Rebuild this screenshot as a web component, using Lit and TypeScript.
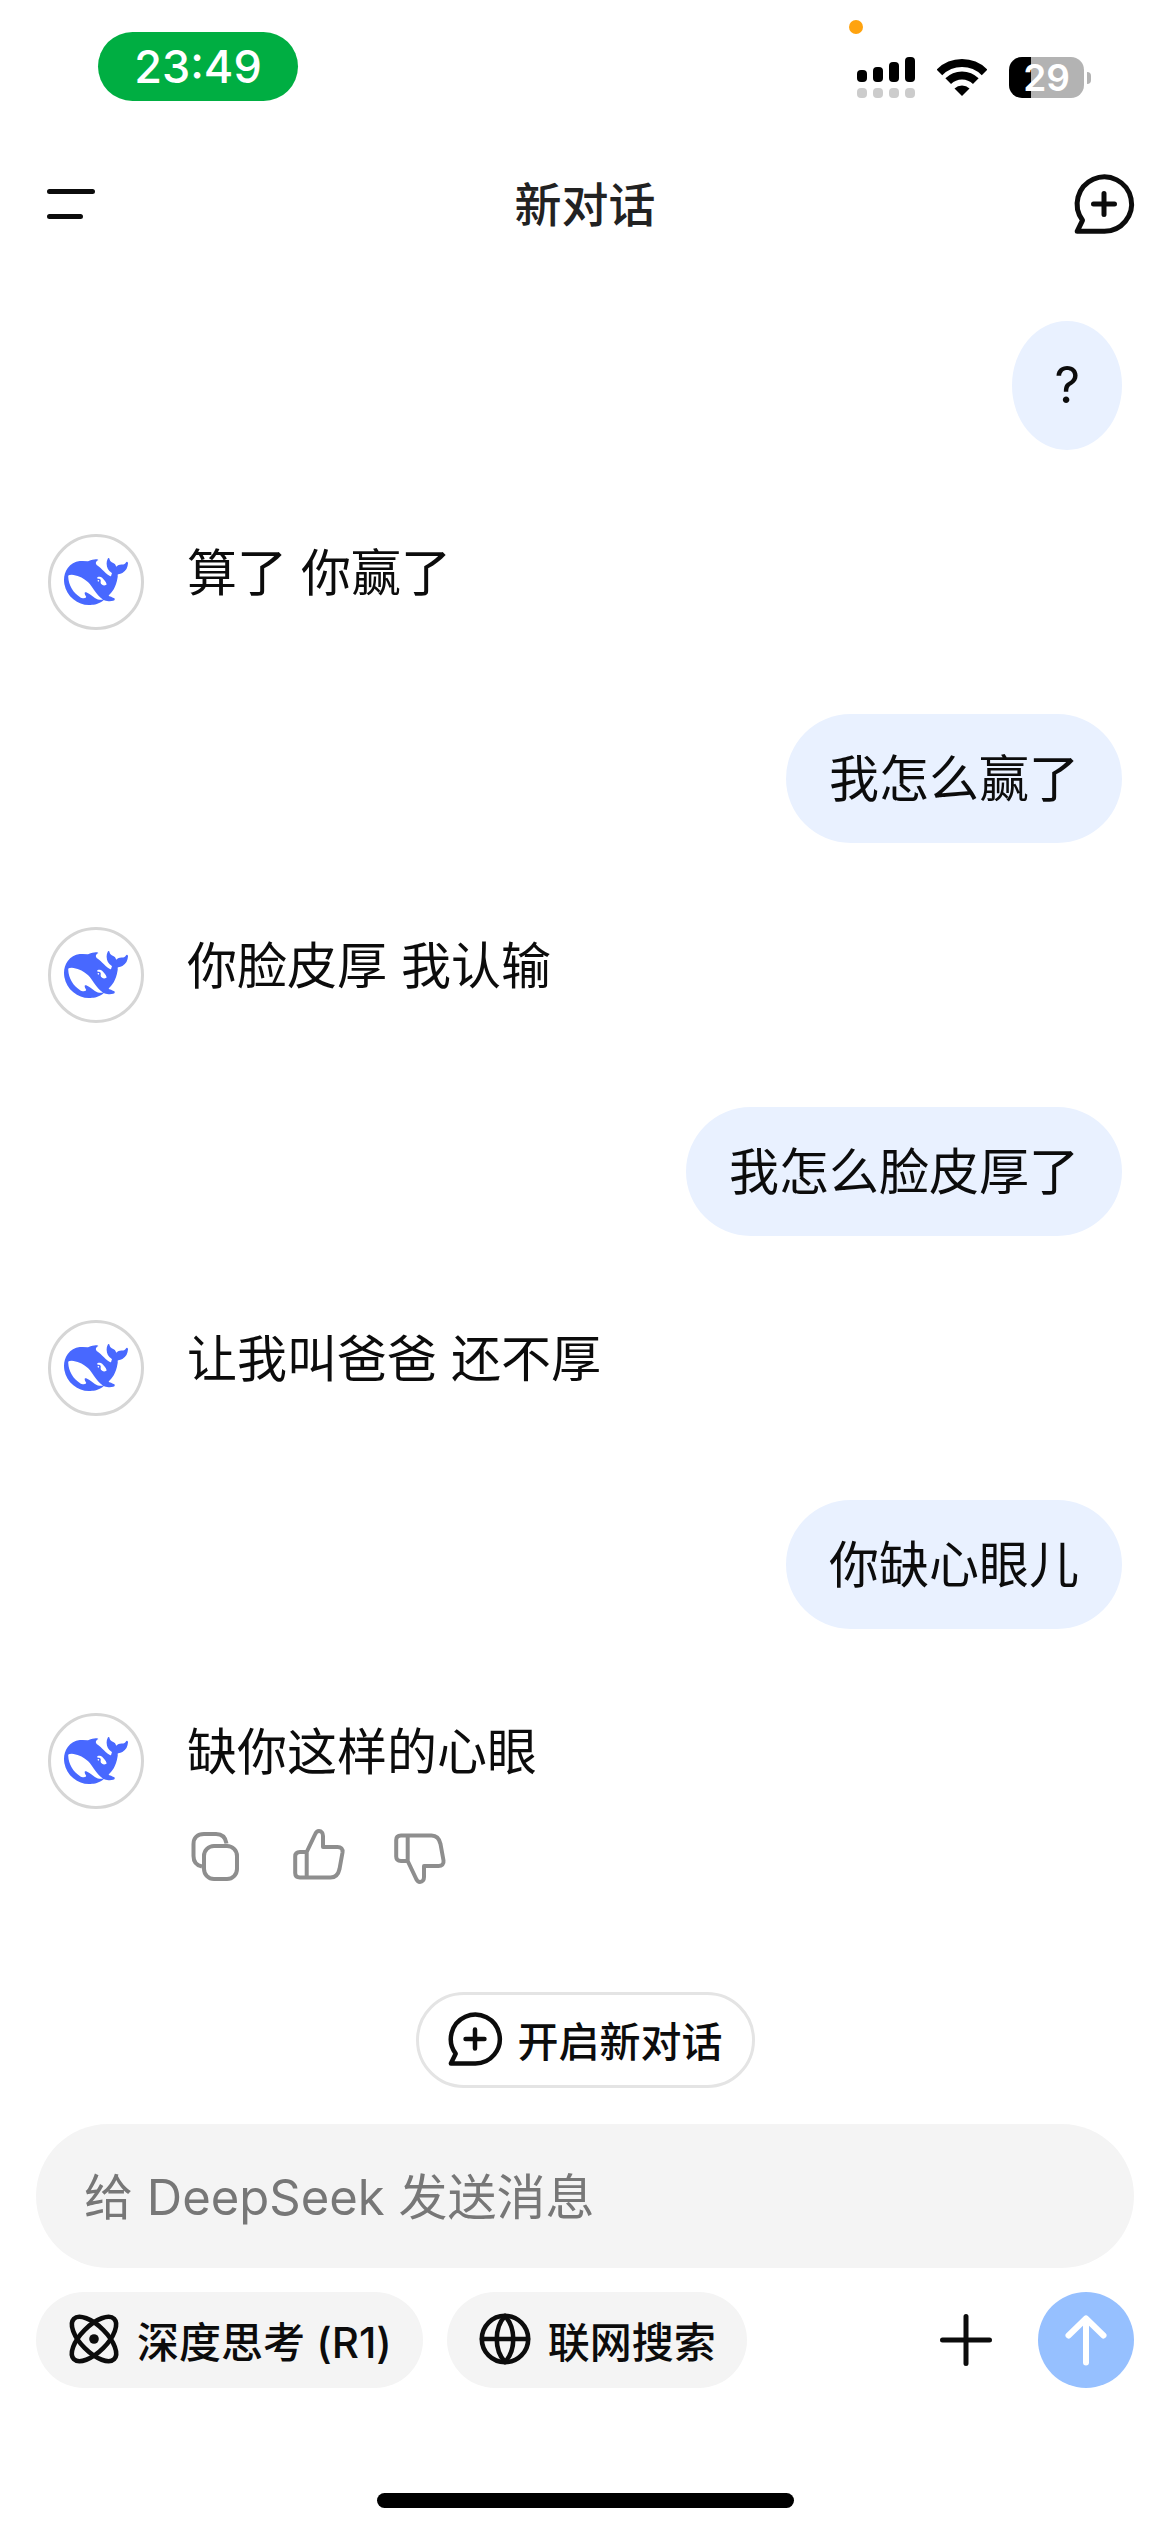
import { LitElement, html, css, svg } from "lit";
import { customElement, property } from "lit/decorators.js";
import { classMap } from "lit/directives/class-map.js";

type Message = { from: "user" | "assistant"; text: string; actions?: boolean };

const MESSAGES: Message[] = [
  { from: "user", text: "?" },
  { from: "assistant", text: "算了 你赢了" },
  { from: "user", text: "我怎么赢了" },
  { from: "assistant", text: "你脸皮厚 我认输" },
  { from: "user", text: "我怎么脸皮厚了" },
  { from: "assistant", text: "让我叫爸爸 还不厚" },
  { from: "user", text: "你缺心眼儿" },
  { from: "assistant", text: "缺你这样的心眼", actions: true },
];

const WHALE =
  "M23.748 4.482c-.254-.124-.364.113-.512.234-.051.039-.094.09-.137.136-.372.397-.806.657-1.373.626-.829-.046-1.537.214-2.163.848-.133-.782-.575-1.248-1.247-1.548-.352-.156-.708-.311-.955-.65-.172-.241-.219-.51-.305-.774-.055-.16-.11-.323-.293-.35-.2-.031-.278.136-.356.276-.313.572-.434 1.202-.422 1.84.027 1.436.633 2.58 1.838 3.393.137.093.172.187.129.323-.082.28-.18.552-.266.833-.055.179-.137.217-.329.14a5.526 5.526 0 01-1.736-1.18c-.857-.828-1.631-1.742-2.597-2.458a11.365 11.365 0 00-.689-.471c-.985-.957.13-1.743.388-1.836.27-.098.093-.432-.779-.428-.872.004-1.67.295-2.687.684a3.055 3.055 0 01-.465.137 9.597 9.597 0 00-2.883-.102c-1.885.21-3.39 1.102-4.497 2.623C.082 8.606-.231 10.684.152 12.85c.403 2.284 1.569 4.175 3.36 5.653 1.858 1.533 3.997 2.284 6.438 2.14 1.482-.085 3.133-.284 4.994-1.86.47.234.962.327 1.78.397.63.059 1.236-.03 1.705-.128.735-.156.684-.837.419-.961-2.155-1.004-1.682-.595-2.113-.926 1.096-1.296 2.746-2.642 3.392-7.003.05-.347.007-.565 0-.845-.004-.17.035-.237.23-.256a4.173 4.173 0 001.545-.475c1.396-.763 1.96-2.015 2.093-3.517.02-.23-.004-.467-.247-.588zM11.581 18c-2.089-1.642-3.102-2.183-3.52-2.16-.392.024-.321.471-.235.763.09.288.207.486.371.739.114.167.192.416-.113.603-.673.416-1.842-.14-1.897-.167-1.361-.802-2.5-1.86-3.301-3.307-.774-1.393-1.224-2.887-1.298-4.482-.02-.386.093-.522.477-.592a4.696 4.696 0 011.529-.039c2.132.312 3.946 1.265 5.468 2.774.868.86 1.525 1.887 2.202 2.891.72 1.066 1.494 2.082 2.48 2.914.348.292.625.514.891.677-.802.09-2.14.11-3.054-.614zm1-6.44a.306.306 0 01.415-.287.302.302 0 01.2.288.306.306 0 01-.31.307.303.303 0 01-.304-.308zm3.11 1.596c-.2.081-.399.151-.59.16a1.245 1.245 0 01-.798-.254c-.274-.23-.47-.358-.552-.758a1.73 1.73 0 01.016-.588c.07-.327-.008-.537-.239-.727-.187-.156-.426-.199-.688-.199a.559.559 0 01-.254-.078c-.11-.054-.2-.19-.114-.358.028-.054.16-.186.192-.21.356-.202.767-.136 1.146.016.352.144.618.408 1.001.782.391.451.462.576.685.914.176.265.336.537.445.848.067.195-.019.354-.25.452z";

const THUMB =
  "M13.7 23L22 5.5C23 3 24.5 2 26 2C28.500 2 30 4 30 7V18H44.500C48 18 50 20 49.500 23.500L46.500 40C45.300 45.500 42.500 48.500 37.500 48.500H7C4 48.500 2.200 47 2.200 44V27.500C2.200 24.500 4 23 7 23H13.700V48.500";

const shapes = {
  menu: svg`<path d="M13.500 19.500H56.500M13.500 44.500H44.500" stroke-width="5" />`,
  bubblePlus: svg`<path d="M30 57.300H3.200L8.500 46.300A27.200 27.200 0 1 1 30 57.300ZM30 19.500V40.500M19.500 30H40.500" stroke-width="5" />`,
  copy: svg`<rect x="17" y="18" width="33" height="33" rx="10" stroke-width="4" />
    <path d="M39.500 15.500C38.500 9 34.500 6 29 6H17C10.500 6 6.500 10 6.500 16V28C6.500 34 10 37.500 15 38.500" stroke-width="4" stroke-linecap="butt" />`,
  up: svg`<path transform="translate(5 1)" d=${THUMB} stroke-width="4" />`,
  down: svg`<path transform="translate(5 56) scale(1 -1)" d=${THUMB} stroke-width="4" />`,
  atom: svg`<g stroke-width="4.600"><ellipse cx="27" cy="27" rx="28.500" ry="13" transform="rotate(45 27 27)" />
    <ellipse cx="27" cy="27" rx="28.500" ry="13" transform="rotate(-45 27 27)" /></g>
    <circle cx="27" cy="27" r="4.800" fill="currentColor" stroke="none" />`,
  globe: svg`<g stroke-width="4.600"><circle cx="27" cy="27" r="23.200" />
    <path d="M4 27H50M27 4C16 16 16 38 27 50C38 38 38 16 27 4Z" /></g>`,
  plus: svg`<path d="M28 4.500V51.500M4.500 28H51.500" stroke-width="5" />`,
  arrow: svg`<path d="M28 50.500V7M10.500 23.500L28 6.500L45.500 23.500" stroke-width="6" />`,
};

const boxes: Record<keyof typeof shapes, number> = {
  menu: 64, bubblePlus: 60, copy: 56, up: 56, down: 56, atom: 54, globe: 54, plus: 56, arrow: 56,
};

@customElement("line-icon")
class LineIcon extends LitElement {
  static styles = css`
    :host { display: block; flex: none; }
    .icon {
      display: block;
      width: 100%;
      height: 100%;
      overflow: visible;
      fill: none;
      stroke: currentColor;
      stroke-linecap: round;
      stroke-linejoin: round;
    }
  `;
  @property() name: keyof typeof shapes = "plus";
  render() {
    const size = boxes[this.name];
    return html`<svg class="icon" viewBox="0 0 ${size} ${size}" aria-hidden="true">${shapes[this.name]}</svg>`;
  }
}

@customElement("status-bar")
class StatusBar extends LitElement {
  static styles = css`
    :host {
      display: flex;
      justify-content: space-between;
      align-items: flex-start;
      box-sizing: border-box;
      height: 114px;
      padding: 32px 79px 0 98px;
    }
    .time {
      width: 200px;
      border-radius: 35px;
      background: #00ae42;
      color: #fff;
      font-size: 45px;
      font-weight: 500;
      line-height: 69px;
      text-align: center;
    }
    .icons { position: relative; display: flex; align-items: center; gap: 22px; padding-top: 25px; }
    .dot {
      position: absolute;
      top: -12px;
      left: -8px;
      width: 14px;
      height: 14px;
      border-radius: 50%;
      background: #ffa30f;
    }
    .signal { width: 58px; height: 41px; }
    .wifi { width: 50px; height: 37px; }
    .battery { display: flex; align-items: center; gap: 3px; }
    .cell {
      width: 75px;
      border-radius: 13px;
      background: linear-gradient(to right, #000 22px, #b3b3b3 22px);
      color: #fff;
      font-size: 37px;
      font-weight: 600;
      line-height: 41px;
      text-align: center;
    }
    .nub { width: 4px; height: 12px; border-radius: 0 6px 6px 0; background: #b3b3b3; }
  `;
  render() {
    const tops = [13, 10, 5, 0];
    return html`
      <span class="time">23:49</span>
      <div class="icons">
        <span class="dot"></span>
        <svg class="signal" viewBox="0 0 58 41" aria-hidden="true">
          ${tops.map((y, i) => svg`
            <rect x=${i * 16} y=${y} width="10" height=${25 - y} rx="4" />
            <rect x=${i * 16} y="31" width="10" height="10" rx="4" fill="#ccc" />`)}
        </svg>
        <svg class="wifi" viewBox="0 0 50 37" aria-hidden="true">
          <g fill="none" stroke="#000" stroke-width="8">
            <path d="M2.400 13.400A32 32 0 0 1 47.600 13.400" />
            <path d="M11.200 22.200A19.500 19.500 0 0 1 38.800 22.200" />
          </g>
          <path d="M25 37L17.500 29.500A11 11 0 0 1 32.500 29.500Z" />
        </svg>
        <div class="battery"><span class="cell">29</span><span class="nub"></span></div>
      </div>
    `;
  }
}

@customElement("chat-message")
class ChatMessage extends LitElement {
  static styles = css`
    :host { display: block; font-size: 50px; line-height: 65px; color: #0c0c0c; }
    .user {
      width: fit-content;
      box-sizing: border-box;
      margin: 0 0 0 auto;
      padding: 33px 43px 31px;
      border-radius: 65px;
      background: #e9f1ff;
    }
    .short { padding: 32px 42px; border-radius: 50%; }
    .assistant { display: flex; align-items: flex-start; gap: 43px; }
    .avatar {
      display: grid;
      place-items: center;
      flex: none;
      box-sizing: border-box;
      width: 96px;
      height: 96px;
      border: 3px solid #d6d6d6;
      border-radius: 50%;
    }
    .whale { width: 64px; height: 64px; fill: #4868ff; }
    .body { padding-top: 7px; }
    .text { margin: 0; }
    .actions { display: flex; gap: 45px; margin-top: 43px; }
    .action { padding: 0; border: 0; background: none; color: #8e8e8e; }
    .glyph { width: 56px; height: 56px; }
  `;
  @property({ attribute: false }) message!: Message;
  render() {
    const { from, text, actions } = this.message;
    if (from === "user") {
      return html`<p class=${classMap({ user: true, short: text.length === 1 })}>${text}</p>`;
    }
    return html`
      <div class="assistant">
        <span class="avatar">
          <svg class="whale" viewBox="0 0 24 24" aria-hidden="true"><path d=${WHALE} /></svg>
        </span>
        <div class="body">
          <p class="text">${text}</p>
          ${actions
            ? html`<div class="actions">
                <button class="action" aria-label="复制"><line-icon class="glyph" name="copy"></line-icon></button>
                <button class="action" aria-label="赞"><line-icon class="glyph" name="up"></line-icon></button>
                <button class="action" aria-label="踩"><line-icon class="glyph" name="down"></line-icon></button>
              </div>`
            : null}
        </div>
      </div>
    `;
  }
}

@customElement("chat-composer")
class ChatComposer extends LitElement {
  static styles = css`
    :host { display: flex; flex-direction: column; padding: 0 36px; }
    button { font: inherit; color: inherit; }
    .fresh {
      display: flex;
      align-items: center;
      align-self: center;
      box-sizing: border-box;
      height: 96px;
      gap: 16px;
      margin-bottom: 36px;
      padding: 0 29px 2px;
      border: 3px solid #e4e4e4;
      border-radius: 48px;
      background: #fff;
      font-size: 41px;
      font-weight: 500;
    }
    .input {
      box-sizing: border-box;
      width: 100%;
      height: 144px;
      margin-bottom: 24px;
      padding: 2px 48px 0;
      border: 0;
      outline: 0;
      border-radius: 72px;
      background: #f4f4f4;
      color: #0c0c0c;
      font-family: inherit;
      font-size: 49px;
    }
    .input::placeholder { color: #777; opacity: 1; }
    .tools { display: flex; align-items: center; }
    .chip {
      display: flex;
      align-items: center;
      box-sizing: border-box;
      height: 96px;
      gap: 16px;
      margin-right: 24px;
      padding: 0 31px 2px;
      border: 0;
      border-radius: 48px;
      background: #f4f4f4;
      font-size: 42px;
      font-weight: 500;
    }
    .add { margin-left: auto; padding: 0; border: 0; background: none; }
    .send {
      display: grid;
      place-items: center;
      width: 96px;
      height: 96px;
      margin-left: 44px;
      padding: 0;
      border: 0;
      border-radius: 50%;
      background: #96c0ff;
    }
    .fresh .glyph { width: 54px; height: 54px; }
    .chip .glyph { width: 54px; height: 54px; }
    .add .glyph { width: 56px; height: 56px; }
    .send .glyph { width: 56px; height: 56px; color: #fff; }
  `;
  render() {
    return html`
      <button class="fresh"><line-icon class="glyph" name="bubblePlus"></line-icon>开启新对话</button>
      <input class="input" type="text" placeholder="给 DeepSeek 发送消息" aria-label="给 DeepSeek 发送消息" />
      <div class="tools">
        <button class="chip"><line-icon class="glyph" name="atom"></line-icon>深度思考 (R1)</button>
        <button class="chip"><line-icon class="glyph" name="globe"></line-icon>联网搜索</button>
        <button class="add" aria-label="添加"><line-icon class="glyph" name="plus"></line-icon></button>
        <button class="send" aria-label="发送"><line-icon class="glyph" name="arrow"></line-icon></button>
      </div>
    `;
  }
}

@customElement("app-root")
class AppRoot extends LitElement {
  static styles = css`
    :host {
      display: flex;
      flex-direction: column;
      min-height: 100vh;
      background: #fff;
      color: #0c0c0c;
      font-family: Inter, "Noto Sans CJK SC", sans-serif;
    }
    .header {
      display: grid;
      grid-template-columns: 1fr auto 1fr;
      align-items: center;
      height: 180px;
      padding: 0 36px;
    }
    .title { margin: 0; padding-top: 2px; color: #222; font-size: 47px; font-weight: 500; line-height: 64px; }
    .tool { padding: 0; border: 0; background: none; color: inherit; }
    .menu { justify-self: start; }
    .new { justify-self: end; }
    .menu .glyph { width: 64px; height: 64px; }
    .new .glyph { width: 60px; height: 60px; }
    .chat {
      display: flex;
      flex: 1;
      flex-direction: column;
      gap: 84px;
      padding: 27px 48px 84px;
    }
    .home { width: 417px; height: 15px; margin: 105px auto 24px; border-radius: 8px; background: #000; }
  `;
  render() {
    return html`
      <status-bar></status-bar>
      <header class="header">
        <button class="tool menu" aria-label="菜单"><line-icon class="glyph" name="menu"></line-icon></button>
        <h1 class="title">新对话</h1>
        <button class="tool new" aria-label="新对话"><line-icon class="glyph" name="bubblePlus"></line-icon></button>
      </header>
      <main class="chat">
        ${MESSAGES.map((m) => html`<chat-message .message=${m}></chat-message>`)}
      </main>
      <chat-composer></chat-composer>
      <div class="home"></div>
    `;
  }
}
